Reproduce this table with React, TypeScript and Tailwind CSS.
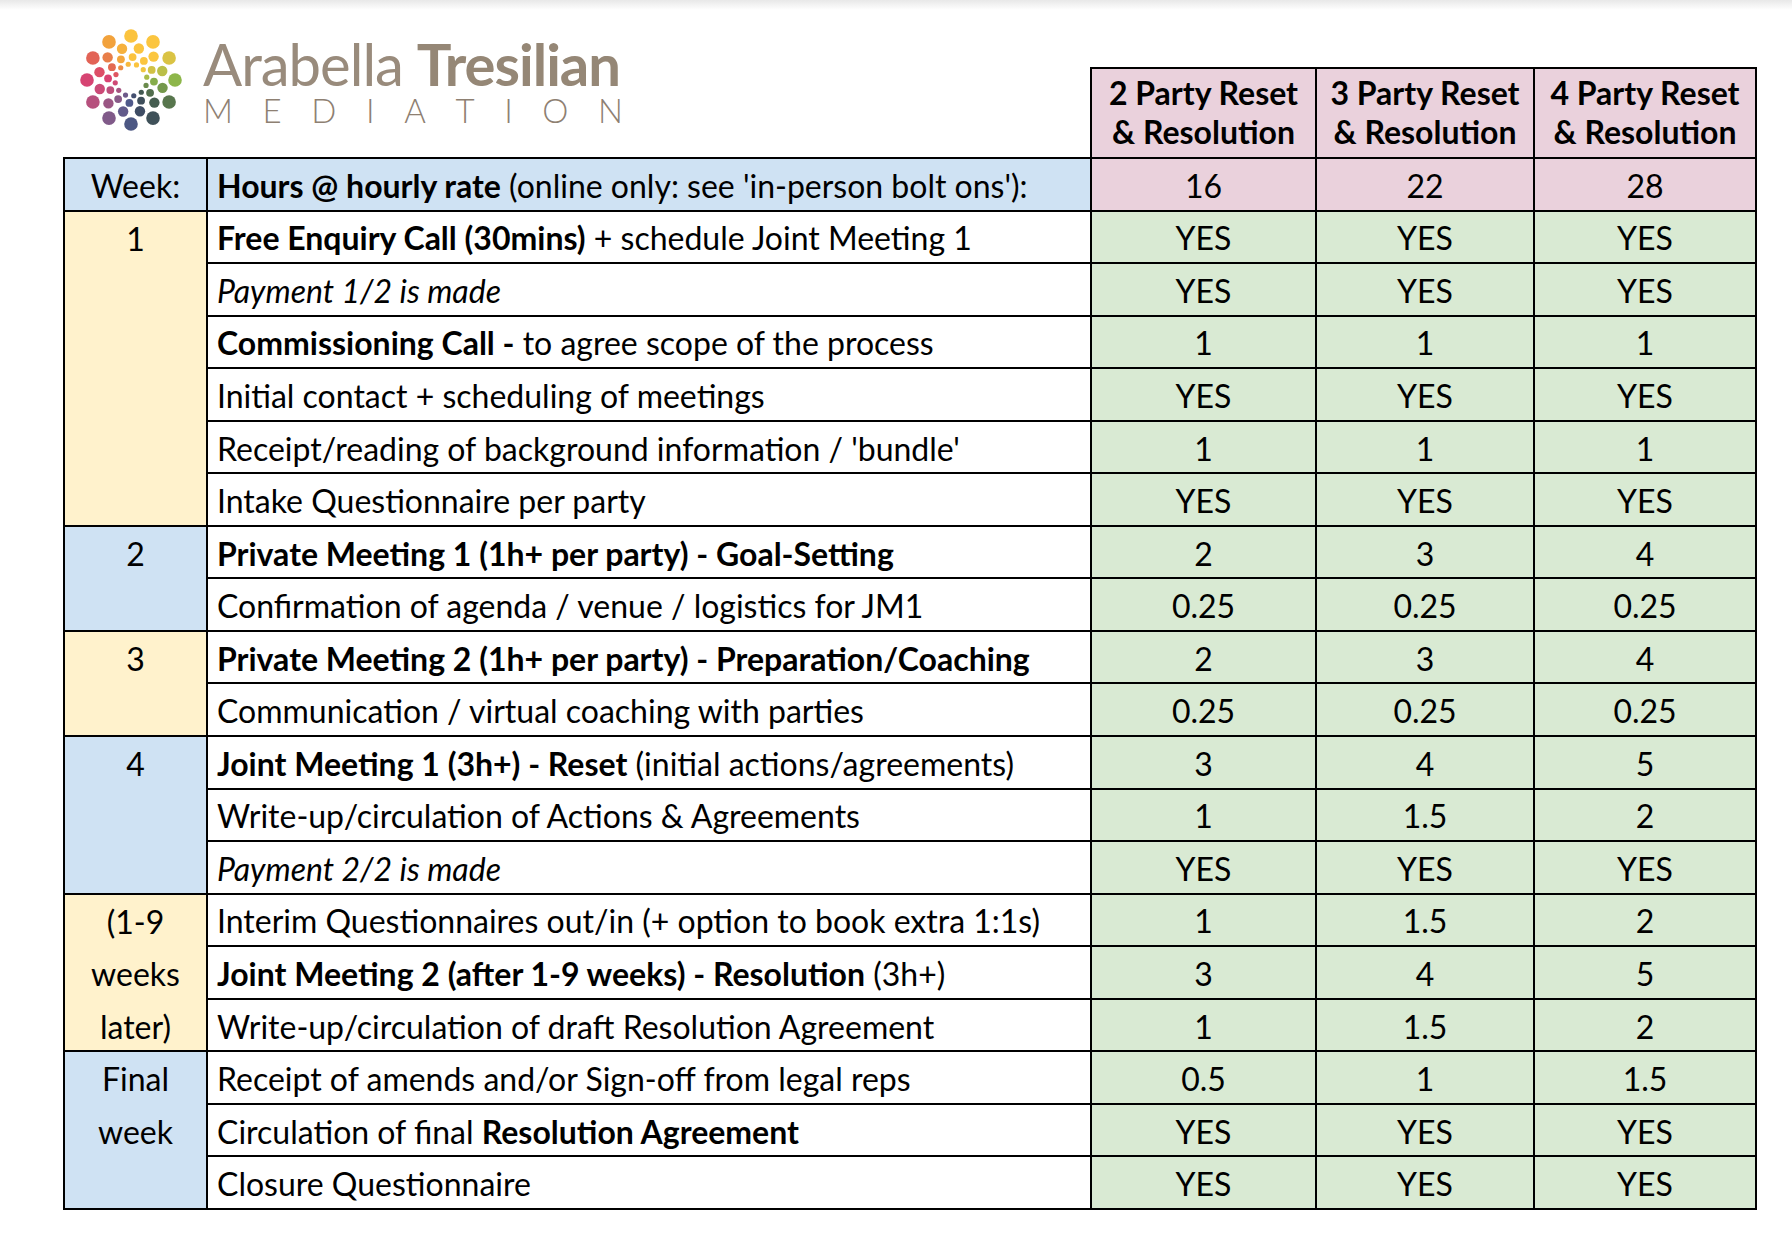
import React from "react"

type Seg = { t: string; b?: boolean; i?: boolean }

const rows: { desc: Seg[]; vals: string[] }[] = [
  { desc: [{ t: "Free Enquiry Call (30mins)", b: true }, { t: " + schedule Joint Meeting 1" }], vals: ["YES", "YES", "YES"] },
  { desc: [{ t: "Payment 1/2 is made", i: true }], vals: ["YES", "YES", "YES"] },
  { desc: [{ t: "Commissioning Call -", b: true }, { t: " to agree scope of the process" }], vals: ["1", "1", "1"] },
  { desc: [{ t: "Initial contact + scheduling of meetings" }], vals: ["YES", "YES", "YES"] },
  { desc: [{ t: "Receipt/reading of background information / 'bundle'" }], vals: ["1", "1", "1"] },
  { desc: [{ t: "Intake Questionnaire per party" }], vals: ["YES", "YES", "YES"] },
  { desc: [{ t: "Private Meeting 1 (1h+ per party) - Goal-Setting", b: true }], vals: ["2", "3", "4"] },
  { desc: [{ t: "Confirmation of agenda / venue / logistics for JM1" }], vals: ["0.25", "0.25", "0.25"] },
  { desc: [{ t: "Private Meeting 2 (1h+ per party) - Preparation/Coaching", b: true }], vals: ["2", "3", "4"] },
  { desc: [{ t: "Communication / virtual coaching with parties" }], vals: ["0.25", "0.25", "0.25"] },
  { desc: [{ t: "Joint Meeting 1 (3h+) - Reset", b: true }, { t: " (initial actions/agreements)" }], vals: ["3", "4", "5"] },
  { desc: [{ t: "Write-up/circulation of Actions & Agreements" }], vals: ["1", "1.5", "2"] },
  { desc: [{ t: "Payment 2/2 is made", i: true }], vals: ["YES", "YES", "YES"] },
  { desc: [{ t: "Interim Questionnaires out/in (+ option to book extra 1:1s)" }], vals: ["1", "1.5", "2"] },
  { desc: [{ t: "Joint Meeting 2 (after 1-9 weeks) - Resolution", b: true }, { t: " (3h+)" }], vals: ["3", "4", "5"] },
  { desc: [{ t: "Write-up/circulation of draft Resolution Agreement" }], vals: ["1", "1.5", "2"] },
  { desc: [{ t: "Receipt of amends and/or Sign-off from legal reps" }], vals: ["0.5", "1", "1.5"] },
  { desc: [{ t: "Circulation of final " }, { t: "Resolution Agreement", b: true }], vals: ["YES", "YES", "YES"] },
  { desc: [{ t: "Closure Questionnaire" }], vals: ["YES", "YES", "YES"] },
]

// week groups keyed by first row index
const weeks: Record<number, { span: string; lines: string[]; bg: string }> = {
  0: { span: "row-span-6", lines: ["1"], bg: "bg-[#fff2cc]" },
  6: { span: "row-span-2", lines: ["2"], bg: "bg-[#cfe2f3]" },
  8: { span: "row-span-2", lines: ["3"], bg: "bg-[#fff2cc]" },
  10: { span: "row-span-3", lines: ["4"], bg: "bg-[#cfe2f3]" },
  13: { span: "row-span-3", lines: ["(1-9", "weeks", "later)"], bg: "bg-[#fff2cc]" },
  16: { span: "row-span-3", lines: ["Final", "week"], bg: "bg-[#cfe2f3]" },
}

const stops: [number, string][] = [
  [0, "#8db64a"],
  [40, "#46604e"],
  [70, "#3c4a5e"],
  [95, "#505a8c"],
  [125, "#8a5a88"],
  [160, "#c84c78"],
  [185, "#da4271"],
  [215, "#e36a50"],
  [240, "#f2a23c"],
  [270, "#fbc33e"],
  [315, "#fbc640"],
  [345, "#b8bf48"],
  [360, "#8db64a"],
]

function hex(c: string) {
  return [1, 3, 5].map((i) => parseInt(c.slice(i, i + 2), 16))
}

function colorAt(deg: number) {
  const d = ((deg % 360) + 360) % 360
  for (let k = 0; k < stops.length - 1; k++) {
    const [a, ca] = stops[k]
    const [b, cb] = stops[k + 1]
    if (d >= a && d <= b) {
      const f = (d - a) / (b - a)
      const x = hex(ca)
      const y = hex(cb)
      return `rgb(${x.map((v, i) => Math.round(v + (y[i] - v) * f)).join(",")})`
    }
  }
  return stops[0][1]
}

const rings = [
  { r: 44, s: 6.8, off: 0 },
  { r: 32.5, s: 5.2, off: 14 },
  { r: 23, s: 3.9, off: 4 },
  { r: 16, s: 2.6, off: 20 },
]

function LogoMark() {
  const dots: { x: number; y: number; s: number; c: string }[] = []
  rings.forEach((ring) => {
    for (let k = 0; k < 12; k++) {
      const deg = k * 30 + ring.off
      const rad = (deg * Math.PI) / 180
      dots.push({ x: 55 + ring.r * Math.cos(rad), y: 55 + ring.r * Math.sin(rad), s: ring.s, c: colorAt(deg) })
    }
  })
  return (
    <svg width="110" height="110" viewBox="0 0 110 110">
      {dots.map((d, i) => (
        <circle key={i} cx={d.x} cy={d.y} r={d.s} fill={d.c} />
      ))}
    </svg>
  )
}

function Desc({ segs }: { segs: Seg[] }) {
  return (
    <>
      {segs.map((s, i) => (
        <span key={i} className={`whitespace-pre ${s.b ? "font-bold" : ""} ${s.i ? "italic" : ""}`}>
          {s.t}
        </span>
      ))}
    </>
  )
}

export default function App() {
  return (
    <div className="min-h-screen bg-white font-['Lato',sans-serif] text-black">
      <div className="h-[10px] bg-gradient-to-b from-[#e8e8e8] to-white" />
      <div className="pl-[63px]">
        {/* Logo + column headers */}
        <div className="flex items-start">
          <div className="w-[1027px] flex items-start pl-[13px] pt-[15px]">
            <LogoMark />
            <div className="ml-[17px] mt-[10px] text-[#998b7c]">
              <div className="text-[58px] leading-[58px] tracking-[-1px] whitespace-nowrap">
                <span className="font-normal">Arabella</span> <span className="font-bold text-[#958776]">Tresilian</span>
              </div>
              <div className="flex justify-between w-[420px] mt-[1px] text-[33px] leading-[33px] font-light text-[#8e8072]">
                {"MEDIATION".split("").map((l, i) => (
                  <span key={i}>{l}</span>
                ))}
              </div>
            </div>
          </div>
          <div className="mt-[57px] grid grid-cols-[223px_216px_220px] gap-x-[2px] bg-black px-[2px] pt-[2px]">
            {["2", "3", "4"].map((n) => (
              <div key={n} className="h-[88px] bg-[#ead1dc] flex flex-col items-center justify-center pb-[2px] text-[32px] leading-[39px] font-bold whitespace-nowrap">
                <span>{n} Party Reset</span>
                <span>&amp; Resolution</span>
              </div>
            ))}
          </div>
        </div>

        {/* Table */}
        <div className="w-[1694px] grid grid-cols-[141px_882px_223px_216px_220px] grid-rows-[repeat(20,50.55px)] gap-[2px] bg-black p-[2px] text-[32px]">
          <div className="bg-[#cfe2f3] flex items-center justify-center pt-[3px]">Week:</div>
          <div className="bg-[#cfe2f3] flex items-center pl-[9px] pt-[3px] whitespace-pre">
            <span className="font-bold">Hours @ hourly rate</span> (online only: see 'in-person bolt ons'):
          </div>
          {["16", "22", "28"].map((v) => (
            <div key={v} className="bg-[#ead1dc] flex items-center justify-center pt-[3px]">
              {v}
            </div>
          ))}
          {rows.map((row, idx) => (
            <React.Fragment key={idx}>
              {weeks[idx] && (
                <div className={`${weeks[idx].span} ${weeks[idx].bg} flex flex-col items-center pt-[1px] leading-[52.55px]`}>
                  {weeks[idx].lines.map((l) => (
                    <span key={l}>{l}</span>
                  ))}
                </div>
              )}
              <div className="bg-white flex items-center pl-[9px] pt-[3px]">
                <Desc segs={row.desc} />
              </div>
              {row.vals.map((v, k) => (
                <div key={k} className="bg-[#d9ead3] flex items-center justify-center pt-[3px]">
                  {v}
                </div>
              ))}
            </React.Fragment>
          ))}
        </div>
      </div>
    </div>
  )
}
